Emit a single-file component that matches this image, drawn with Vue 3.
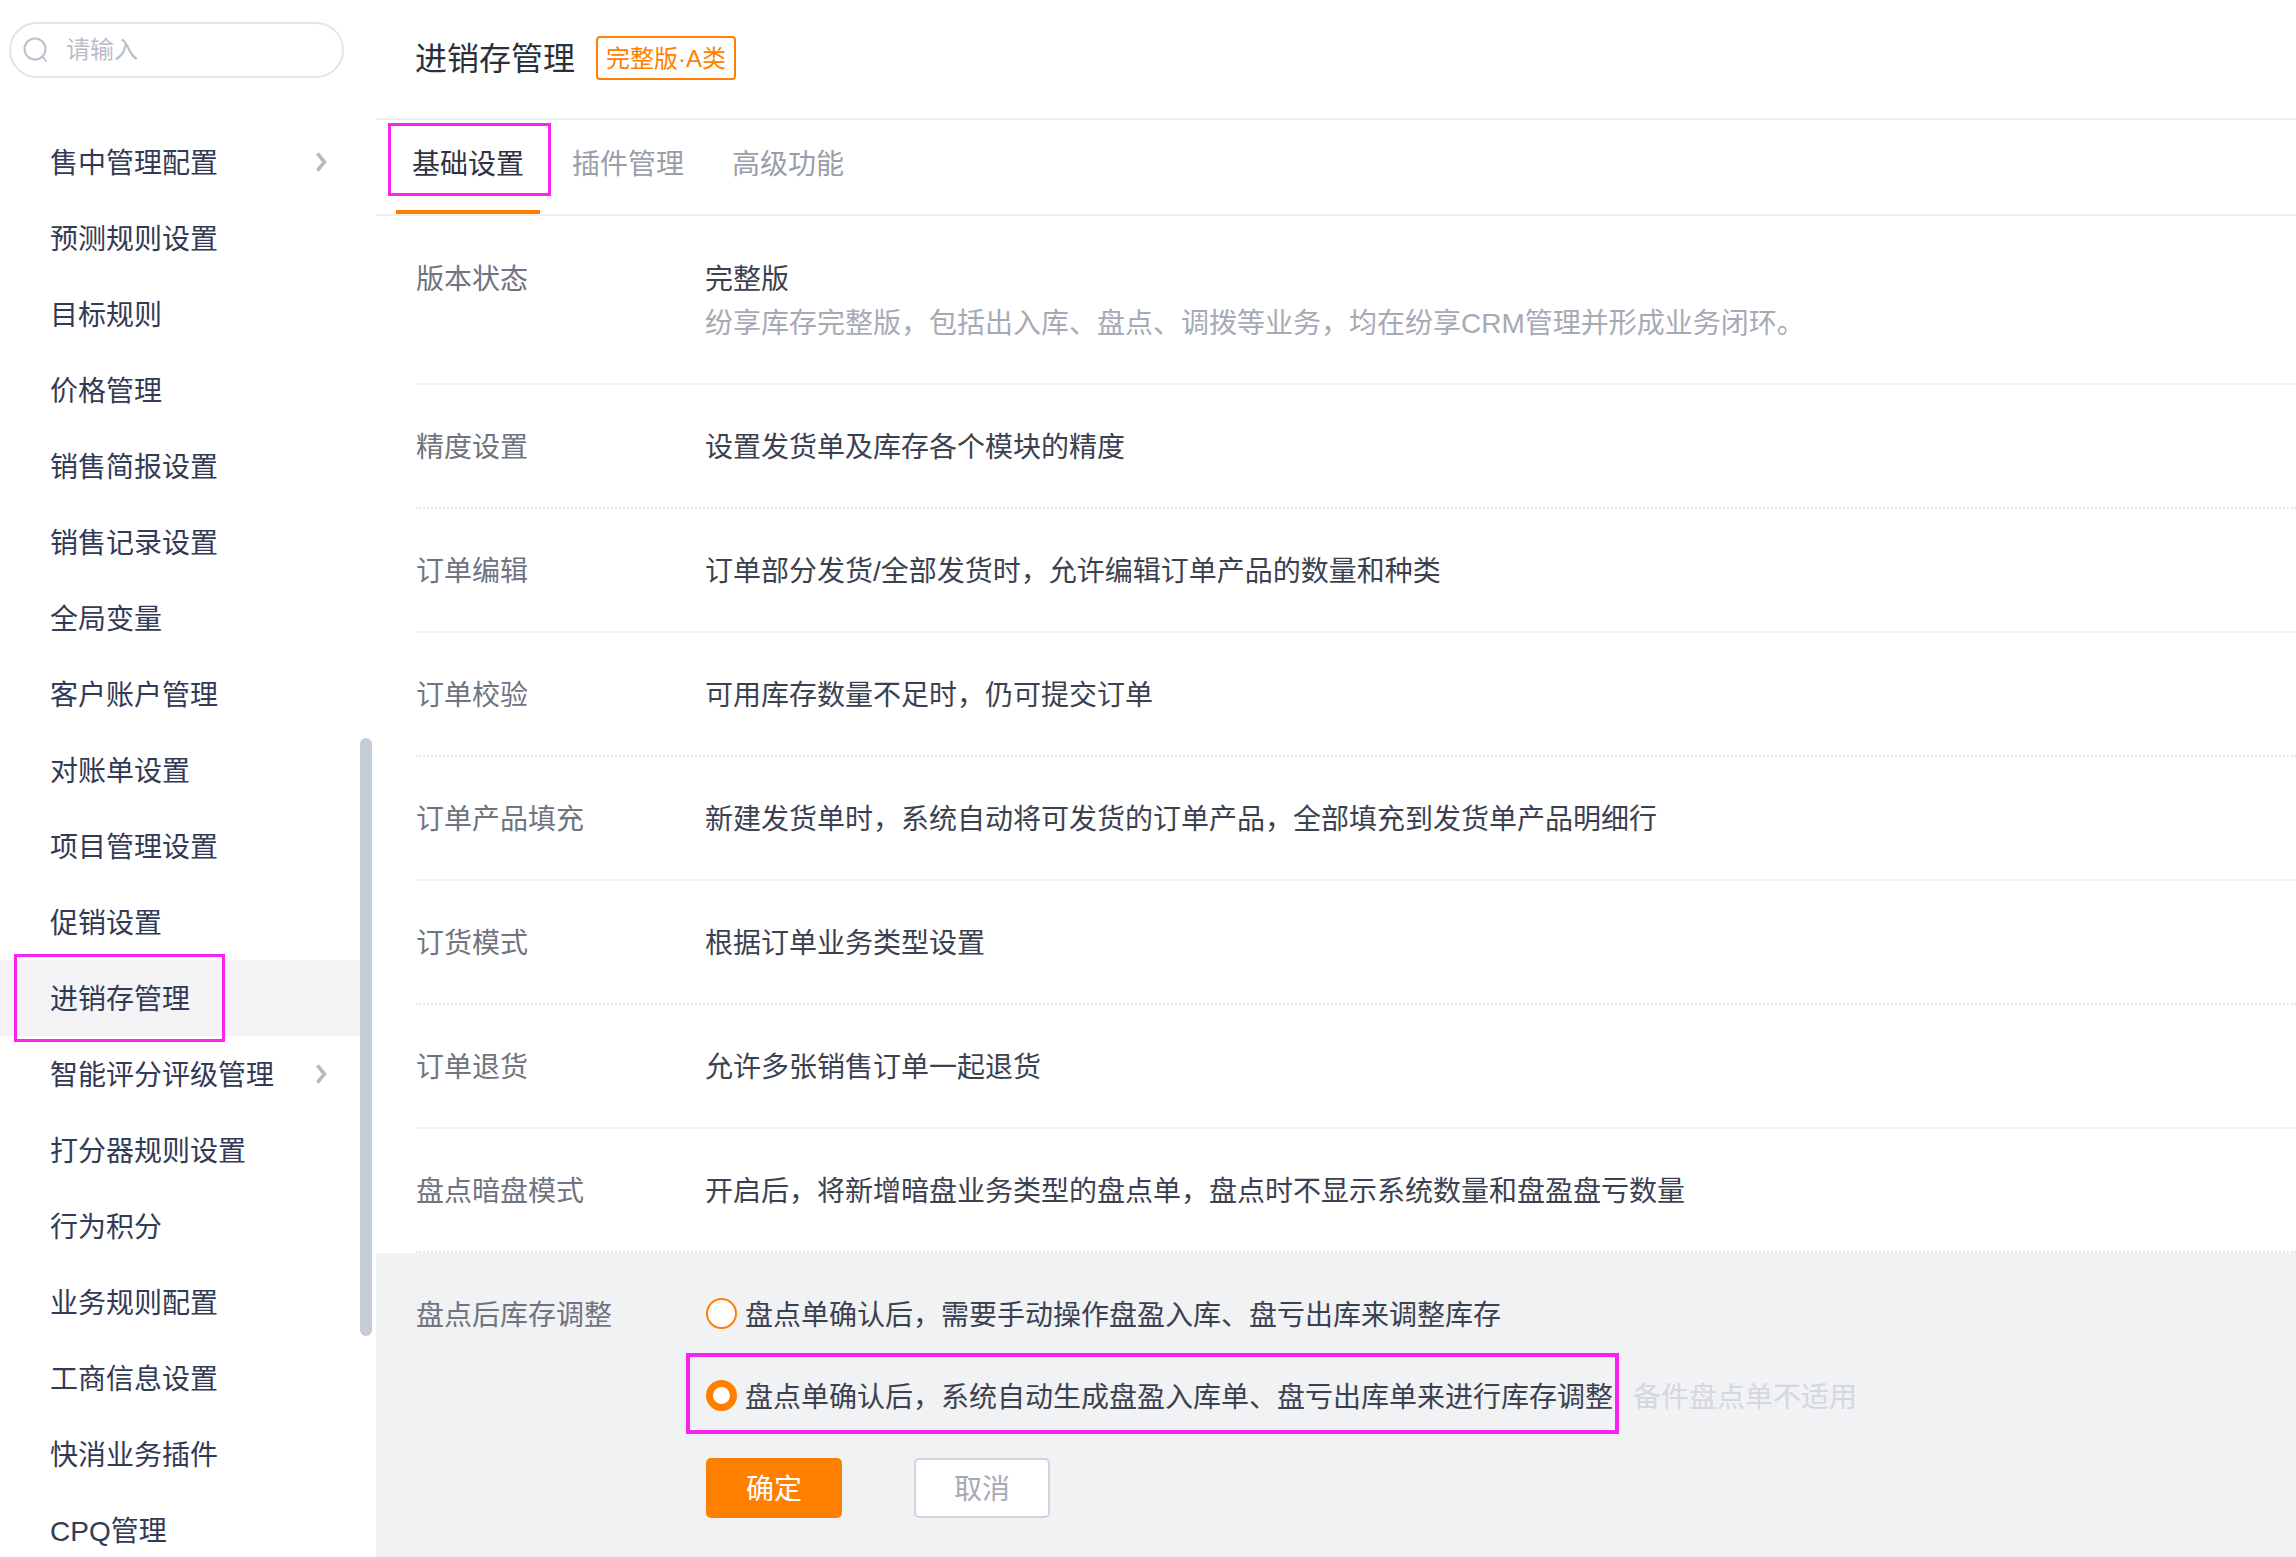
<script setup>
const menu = [
  { t: '售中管理配置', arrow: true },
  { t: '预测规则设置' },
  { t: '目标规则' },
  { t: '价格管理' },
  { t: '销售简报设置' },
  { t: '销售记录设置' },
  { t: '全局变量' },
  { t: '客户账户管理' },
  { t: '对账单设置' },
  { t: '项目管理设置' },
  { t: '促销设置' },
  { t: '进销存管理', active: true },
  { t: '智能评分评级管理', arrow: true },
  { t: '打分器规则设置' },
  { t: '行为积分' },
  { t: '业务规则配置' },
  { t: '工商信息设置' },
  { t: '快消业务插件' },
  { t: 'CPQ管理' }
]
const rows = [
  { l: '版本状态', v: '完整版', d: '纷享库存完整版，包括出入库、盘点、调拨等业务，均在纷享CRM管理并形成业务闭环。' },
  { l: '精度设置', v: '设置发货单及库存各个模块的精度' },
  { l: '订单编辑', v: '订单部分发货/全部发货时，允许编辑订单产品的数量和种类' },
  { l: '订单校验', v: '可用库存数量不足时，仍可提交订单' },
  { l: '订单产品填充', v: '新建发货单时，系统自动将可发货的订单产品，全部填充到发货单产品明细行' },
  { l: '订货模式', v: '根据订单业务类型设置' },
  { l: '订单退货', v: '允许多张销售订单一起退货' },
  { l: '盘点暗盘模式', v: '开启后，将新增暗盘业务类型的盘点单，盘点时不显示系统数量和盘盈盘亏数量' }
]
</script>

<template>
  <div class="page">
    <aside class="side">
      <div class="search">
        <svg class="search-icon" width="26" height="26" viewBox="0 0 26 26" fill="none">
          <circle cx="12" cy="12" r="10.5" stroke="#bcc1cb" stroke-width="2" />
          <path d="M19.5 19.5L23 24" stroke="#bcc1cb" stroke-width="2" stroke-linecap="round" />
        </svg>
        <span class="placeholder">请输入</span>
      </div>
      <ul class="menu">
        <li v-for="m in menu" :key="m.t" class="item" :class="{ active: m.active }">
          <span class="item-text">{{ m.t }}</span>
          <svg v-if="m.arrow" class="chev" width="12" height="20" viewBox="0 0 12 20" fill="none">
            <path d="M2.5 1.5L9.5 10L2.5 18.5" stroke="#b7bbc7" stroke-width="3.6" />
          </svg>
          <i v-if="m.active" class="mark mark-menu"></i>
        </li>
      </ul>
      <div class="scrollbar"></div>
    </aside>
    <main class="main">
      <header class="head">
        <h1 class="title">进销存管理</h1>
        <span class="tag">完整版·A类</span>
      </header>
      <nav class="tabs">
        <div class="tab on">基础设置<i class="mark mark-tab"></i></div>
        <div class="tab">插件管理</div>
        <div class="tab">高级功能</div>
      </nav>
      <section class="rows">
        <div v-for="r in rows" :key="r.l" class="row">
          <div class="label">{{ r.l }}</div>
          <div class="value">
            <div>{{ r.v }}</div>
            <div v-if="r.d" class="desc">{{ r.d }}</div>
          </div>
        </div>
      </section>
      <section class="edit">
        <div class="label edit-label">盘点后库存调整</div>
        <div class="form">
          <div class="opt">
            <span class="opt-in">
              <i class="radio"></i>
              <span class="opt-text">盘点单确认后，需要手动操作盘盈入库、盘亏出库来调整库存</span>
            </span>
          </div>
          <div class="opt opt2">
            <span class="opt-in">
              <i class="radio checked"></i>
              <span class="opt-text">盘点单确认后，系统自动生成盘盈入库单、盘亏出库单来进行库存调整</span>
              <i class="mark mark-opt"></i>
            </span>
            <span class="hint opt-text">备件盘点单不适用</span>
          </div>
          <div class="btns">
            <button class="btn primary">确定</button>
            <button class="btn ghost">取消</button>
          </div>
        </div>
      </section>
    </main>
  </div>
</template>

<style scoped>
.page {
  display: flex;
  width: 2296px;
  height: 1557px;
  overflow: hidden;
  background: #fff;
  font-family: "Liberation Sans", "Noto Sans CJK SC", sans-serif;
  font-size: 28px;
  color: #3c4150;
}
.side {
  position: relative;
  flex: 0 0 376px;
  height: 1557px;
  overflow: hidden;
}
.search {
  display: flex;
  align-items: center;
  box-sizing: border-box;
  width: 335px;
  height: 56px;
  margin: 22px 0 0 9px;
  padding-left: 12px;
  border: 2px solid #e1e4ea;
  border-radius: 28px;
}
.search-icon { flex: none; }
.placeholder {
  margin: 0 0 5px 17px;
  font-size: 24px;
  color: #b9bdc8;
}
.menu {
  list-style: none;
  margin: 46px 0 0;
  padding: 0;
  width: 360px;
}
.item {
  position: relative;
  display: flex;
  align-items: center;
  justify-content: space-between;
  box-sizing: border-box;
  height: 76px;
  padding: 0 33px 0 50px;
  color: #333a55;
}
.item-text { padding-top: 4px; line-height: 40px; }
.item.active { background: #f4f4f7; }
.scrollbar {
  position: absolute;
  left: 360px;
  top: 738px;
  width: 12px;
  height: 598px;
  border-radius: 6px;
  background: #c4ccd6;
}
.mark {
  position: absolute;
  box-sizing: border-box;
  border: 3px solid #f824ee;
  pointer-events: none;
}
.mark-menu { left: 14px; top: -6px; width: 211px; height: 88px; }
.main {
  flex: 1;
  min-width: 0;
  display: flex;
  flex-direction: column;
}
.head {
  display: flex;
  align-items: center;
  box-sizing: border-box;
  height: 120px;
  padding: 0 0 2px 39px;
  border-bottom: 2px solid #eff0f2;
}
.title {
  margin: 0 0 5px;
  font-size: 32px;
  font-weight: 400;
  color: #2b2f3a;
}
.tag {
  box-sizing: border-box;
  display: flex;
  align-items: center;
  justify-content: center;
  width: 140px;
  height: 44px;
  margin-left: 21px;
  padding-bottom: 3px;
  border: 2px solid #ff8000;
  border-radius: 4px;
  color: #ff8000;
  font-size: 24px;
}
.tabs {
  display: flex;
  gap: 16px;
  box-sizing: border-box;
  height: 96px;
  padding-left: 20px;
  border-bottom: 2px solid #eff0f2;
}
.tab {
  position: relative;
  box-sizing: border-box;
  height: 94px;
  padding: 0 16px;
  line-height: 90px;
  color: #9a9ea8;
}
.tab.on {
  color: #2f3340;
  border-bottom: 4px solid #ff8000;
}
.mark-tab { left: -8px; top: 3px; width: 163px; height: 73px; }
.rows { padding: 1px 0 0 40px; }
.row {
  display: flex;
  padding: 41px 0 37px;
  border-bottom: 2px dotted #e8e9ec;
  line-height: 44px;
}
.label {
  flex: 0 0 289px;
  color: #6f7480;
  line-height: 44px;
}
.value { color: #3c4150; }
.desc { color: #a6aab4; }
.edit {
  flex: 1;
  display: flex;
  padding: 38px 0 0 40px;
  background: #f1f2f4;
}
.edit-label { margin-top: 3px; }
.form { flex: 1; }
.opt {
  display: flex;
  align-items: center;
  height: 44px;
  line-height: 44px;
}
.opt2 { margin-top: 38px; }
.opt-in {
  position: relative;
  display: inline-flex;
  align-items: center;
}
.opt-text { padding-top: 6px; }
.radio {
  flex: none;
  box-sizing: border-box;
  width: 31px;
  height: 31px;
  margin: 0 8px 0 1px;
  border: 2px solid #ff8000;
  border-radius: 50%;
  background: #fff;
}
.radio.checked { border-width: 7px; }
.mark-opt { left: -19px; top: -17px; right: -6px; bottom: -14px; border-width: 4px; }
.hint { margin-left: 20px; color: #d5d7e0; }
.btns {
  display: flex;
  gap: 72px;
  margin: 41px 0 0 1px;
}
.btn {
  box-sizing: border-box;
  width: 136px;
  height: 60px;
  border-radius: 5px;
  font-family: inherit;
  font-size: 28px;
  padding: 0 0 2px;
}
.primary { background: #ff8000; color: #fff; border: 0; }
.ghost { background: #fff; color: #a6aab4; border: 2px solid #d0d3de; }
</style>

<style>
html, body { margin: 0; overflow: hidden; background: #fff; }
</style>
